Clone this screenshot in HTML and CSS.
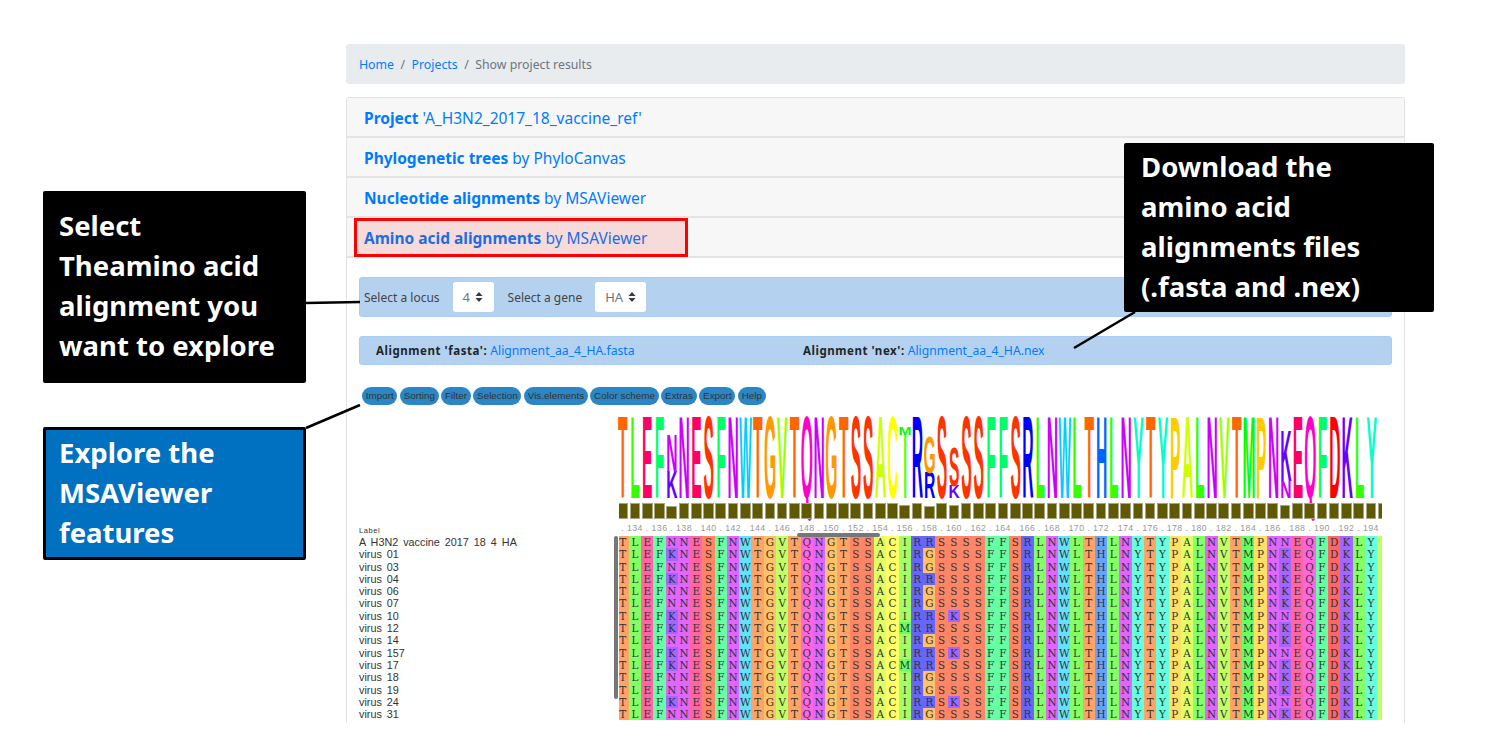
FILE: index.html
```html
<!DOCTYPE html>
<html lang="en">
<head>
  <meta charset="UTF-8" />
  <title>Show project results</title>
  <link rel="stylesheet" href="styles.css">
</head>
<body>
  <div class="page">
    <nav class="breadcrumb">
      <a href="#">Home</a><span class="sep">/</span><a href="#">Projects</a><span class="sep">/</span><span class="current">Show project results</span>
    </nav>

    <div class="card">
      <div class="card-head"><a href="#"><b>Project</b> 'A_H3N2_2017_18_vaccine_ref'</a></div>
      <div class="card-head"><a href="#"><b>Phylogenetic trees</b> by PhyloCanvas</a></div>
      <div class="card-head"><a href="#"><b>Nucleotide alignments</b> by MSAViewer</a></div>
      <div class="card-head"><a href="#"><b>Amino acid alignments</b> by MSAViewer</a><span class="highlight"></span></div>

      <div class="card-body">
        <div class="bar bar-select">
          <span>Select a locus</span>
          <div class="picker picker-locus">4
            <svg width="8" height="12" viewBox="0 0 8 12"><path d="M4 1 7.5 5H.5zM4 11 .5 7h7z" fill="#343a40"/></svg>
          </div>
          <span>Select a gene</span>
          <div class="picker picker-gene">HA
            <svg width="8" height="12" viewBox="0 0 8 12"><path d="M4 1 7.5 5H.5zM4 11 .5 7h7z" fill="#343a40"/></svg>
          </div>
        </div>

        <div class="bar bar-files">
          <div class="file file-fasta"><b>Alignment 'fasta':</b> <a href="#">Alignment_aa_4_HA.fasta</a></div>
          <div class="file"><b>Alignment 'nex':</b> <a href="#">Alignment_aa_4_HA.nex</a></div>
        </div>

        <div class="menu">
          <span>Import</span><span>Sorting</span><span>Filter</span><span>Selection</span><span>Vis.elements</span><span>Color scheme</span><span>Extras</span><span>Export</span><span>Help</span>
        </div>

        <div class="msa">
          <div class="view logo-view"><svg id="logo" width="763" height="84"></svg></div>
          <div class="view"><div class="track conservation" id="conservation"></div></div>
          <div class="label-head">Label</div>
          <div class="view"><div class="track axis" id="axis"></div></div>
          <div class="labels" id="labels"></div>
          <div class="seqs">
            <div class="view"><div class="track" id="rows"></div></div>
            <span class="thumb thumb-v"></span>
            <span class="thumb thumb-h"></span>
          </div>
        </div>
      </div>
    </div>
  </div>

  <!-- slide annotations on top of the screenshot -->
  <svg class="leaders" width="1488" height="750">
    <path d="M306 303 360 302M306 428 360 405M1135 312 1074 348" stroke="#000" stroke-width="2.5" fill="none"/>
  </svg>
  <div class="callout callout-select">Select<br>Theamino acid<br>alignment you<br>want to explore</div>
  <div class="callout callout-explore">Explore the<br>MSAViewer<br>features</div>
  <div class="callout callout-download">Download the<br>amino acid<br>alignments files<br>(.fasta and .nex)</div>

  <script src="app.js"></script>
</body>
</html>
```

FILE: styles.css
```css
body { font-family: "Noto Sans", Arial, sans-serif; margin: 0; background: #fff; color: #495057; height: 750px; overflow: hidden; position: relative; }
a { color: #007bff; text-decoration: none; }
b { font-weight: 700; }

.page { width: 1059px; margin-left: 346px; padding-top: 44px; }

.breadcrumb { height: 40px; display: flex; align-items: center; padding: 0 13px; background: #e9ecef; border-radius: 3px; font-size: 12.3px; box-sizing: border-box; margin-bottom: 13px; }
.breadcrumb .sep { color: #6c757d; margin: 0 6.5px; }
.breadcrumb .current { color: #6c757d; }

.card { border: 1px solid #e2e2e2; border-bottom: none; border-radius: 3px 3px 0 0; }
.card-head { position: relative; padding: 1px 0 0 17px; height: 37px; display: flex; align-items: center; background: #f7f7f7; border-bottom: 2px solid #e4e4e4; font-size: 15.5px; }
.highlight { position: absolute; left: 7px; top: 0; width: 334px; height: 39px; box-sizing: border-box; border: 3.5px solid #f00; background: rgba(255, 0, 0, 0.11); }

.card-body { padding: 19px 12px 2px; height: 465px; box-sizing: border-box; }

.bar { background: #b4d2f0; border: 1px solid #a9ccf2; border-radius: 3px; box-sizing: border-box; display: flex; align-items: center; font-size: 12px; }
.bar-select { height: 40px; padding-left: 4px; color: #444; }
.bar-files { height: 29px; margin-top: 19px; padding-left: 16px; color: #212529; font-size: 11.5px; }
.bar-files b { letter-spacing: 0.55px; }
.bar-files a { font-size: 12.2px; }
.file-fasta { width: 427px; }

.picker { height: 30px; background: #fff; border-radius: 3px; display: flex; align-items: center; box-sizing: border-box; color: #6c757d; font-size: 13px; }
.picker svg { margin-left: 5px; }
.picker-locus { width: 41px; margin: 0 14px 0 13px; padding-left: 10px; }
.picker-gene { width: 51px; margin-left: 13px; padding-left: 10px; }

.menu { display: flex; gap: 2.6px; margin: 22px 0 0 3px; height: 17.5px; }
.menu span { height: 17.5px; line-height: 17.5px; padding: 0 3.73px; background: #2a86c4; border-radius: 9px; color: #333; font-family: "Liberation Sans", Arial, sans-serif; font-size: 9.9px; }

.msa { display: grid; grid-template-columns: 260px 763px; margin-top: 13.5px; font-family: "Liberation Sans", Arial, sans-serif; }
.view { grid-column: 2; overflow: hidden; }
.logo-view { height: 84px; overflow: visible; }
.logo-view svg { display: block; overflow: visible; }
.logo-view text { font-family: "Liberation Sans", Arial, sans-serif; font-weight: 700; font-size: 14px; text-anchor: middle; fill: rgb(var(--c)); }
.track { margin-left: -2.44px; }

.conservation { display: flex; align-items: flex-end; height: 17px; }
.bar-cell { flex: none; width: 10.68px; margin: 0 0.8px; box-sizing: border-box; background: #5f5a00; border: 1px solid #a8a587; }

.label-head { grid-column: 1; font-size: 7.5px; letter-spacing: 0.6px; color: #333; align-self: end; line-height: 11px; }
.axis { display: flex; height: 17px; align-items: center; }
.tick { flex: none; width: 12.28px; display: flex; justify-content: center; white-space: nowrap; font-size: 8.8px; letter-spacing: 0.4px; color: #9a9a9a; }

.labels { grid-column: 1; font-size: 10.8px; color: #333; word-spacing: 2px; }
.labels div { height: 12.3px; line-height: 12.3px; white-space: nowrap; }

.seqs { grid-column: 2; position: relative; }
.seq { display: flex; height: 12.3px; }
.seq::after { content: ""; flex: none; width: 12.28px; background: rgba(153, 255, 0, 0.6); }
.cell { flex: none; width: 12.28px; text-align: center; line-height: 12.3px; font-family: "DejaVu Serif", serif; font-size: 10.4px; color: #333; background: rgba(var(--c), 0.6); }

.thumb { position: absolute; background: #777; border-radius: 2px; }
.thumb-v { left: -5px; top: 0; width: 4px; height: 163px; }
.thumb-h { left: 178px; top: -3px; width: 83px; height: 4px; }

/* Taylor residue colours */
.aa-A { --c: 204, 255, 0; }
.aa-R { --c: 0, 0, 255; }
.aa-N { --c: 204, 0, 255; }
.aa-D { --c: 255, 0, 0; }
.aa-C { --c: 255, 255, 0; }
.aa-Q { --c: 255, 0, 204; }
.aa-E { --c: 255, 0, 102; }
.aa-G { --c: 255, 153, 0; }
.aa-H { --c: 0, 102, 255; }
.aa-I { --c: 102, 255, 0; }
.aa-L { --c: 51, 255, 0; }
.aa-K { --c: 102, 0, 255; }
.aa-M { --c: 0, 255, 0; }
.aa-F { --c: 0, 255, 102; }
.aa-P { --c: 255, 204, 0; }
.aa-S { --c: 255, 51, 0; }
.aa-T { --c: 255, 102, 0; }
.aa-W { --c: 0, 204, 255; }
.aa-Y { --c: 0, 255, 204; }
.aa-V { --c: 153, 255, 0; }

.leaders { position: absolute; left: 0; top: 0; }
.callout { position: absolute; box-sizing: border-box; font-family: "Noto Sans", Arial, sans-serif; font-weight: 700; font-size: 27.5px; line-height: 40px; color: #fff; background: #000; border-radius: 2px; }
.callout-select { left: 43px; top: 191px; width: 263px; height: 192px; padding: 15px 0 0 16px; }
.callout-explore { left: 43px; top: 427px; width: 263px; height: 133px; padding: 3px 0 0 13px; background: #0070c0; border: 3px solid #000; }
.callout-download { left: 1124px; top: 143px; width: 310px; height: 169px; padding: 4px 0 0 17px; }
```

FILE: app.js
```js
const BASE = 'TLEFNNESFNWTGVTQNGTSSACIRRSSSSFFSRLNWLTHLNYTYPALNVTMPNNEQFDKLY';
const COL = 12.28;

// label + the columns that differ from the first sequence
const SEQS = [
  ['A H3N2 vaccine 2017 18 4 HA', {}],
  ['virus 01', { 4: 'K', 25: 'G', 54: 'K' }],
  ['virus 03', { 25: 'G', 54: 'K' }],
  ['virus 04', { 4: 'K', 54: 'K' }],
  ['virus 06', { 25: 'G', 54: 'K' }],
  ['virus 07', { 25: 'G', 54: 'K' }],
  ['virus 10', { 4: 'K', 27: 'K' }],
  ['virus 12', { 4: 'K', 23: 'M', 54: 'K' }],
  ['virus 14', { 25: 'G', 54: 'K' }],
  ['virus 157', { 4: 'K', 27: 'K' }],
  ['virus 17', { 4: 'K', 23: 'M', 54: 'K' }],
  ['virus 18', { 25: 'G', 54: 'K' }],
  ['virus 19', { 25: 'G', 54: 'K' }],
  ['virus 24', { 4: 'K', 27: 'K' }],
  ['virus 31', { 25: 'G', 54: 'K' }]
];

// stacks in the logo, bottom letter first, heights in px
const STACKS = {
  4: [['K', 26], ['N', 37]],
  23: [['I', 63], ['M', 8]],
  25: [['R', 25], ['G', 35]],
  27: [['K', 12], ['S', 38]],
  54: [['N', 17], ['K', 50]]
};
const BARS = { 4: 13.5, 23: 14, 25: 13.5, 27: 14.5, 54: 14 };

const labels = document.getElementById('labels');
const rows = document.getElementById('rows');
SEQS.forEach(([name, diff]) => {
  const label = document.createElement('div');
  label.textContent = name;
  labels.appendChild(label);

  const row = document.createElement('div');
  row.className = 'seq';
  [...BASE].forEach((base, i) => {
    const aa = diff[i] || base;
    const cell = document.createElement('span');
    cell.className = 'cell aa-' + aa;
    cell.textContent = aa;
    row.appendChild(cell);
  });
  rows.appendChild(row);
});

const logo = document.getElementById('logo');
const SVG = 'http://www.w3.org/2000/svg';
[...BASE].forEach((base, i) => {
  const stack = STACKS[i] || [[base, 80]];
  let bottom = 80;
  stack.forEach(([aa, h]) => {
    const text = document.createElementNS(SVG, 'text');
    const x = 3.7 + COL * i;
    const sx = aa === 'W' ? 0.95 : 1.12;
    text.setAttribute('class', 'aa-' + aa);
    text.setAttribute('transform', `translate(${x} ${bottom}) scale(${sx} ${h / 9.6})`);
    text.textContent = aa;
    logo.appendChild(text);
    bottom -= h;
  });
});

const conservation = document.getElementById('conservation');
for (let i = 0; i < 63; i++) {
  const bar = document.createElement('div');
  bar.className = 'bar-cell';
  bar.style.height = (BARS[i] || 16.5) + 'px';
  conservation.appendChild(bar);
}

const axis = document.getElementById('axis');
for (let i = 0; i < 62; i++) {
  const tick = document.createElement('span');
  tick.className = 'tick';
  tick.textContent = i % 2 ? 133 + i : '.';
  axis.appendChild(tick);
}
```
